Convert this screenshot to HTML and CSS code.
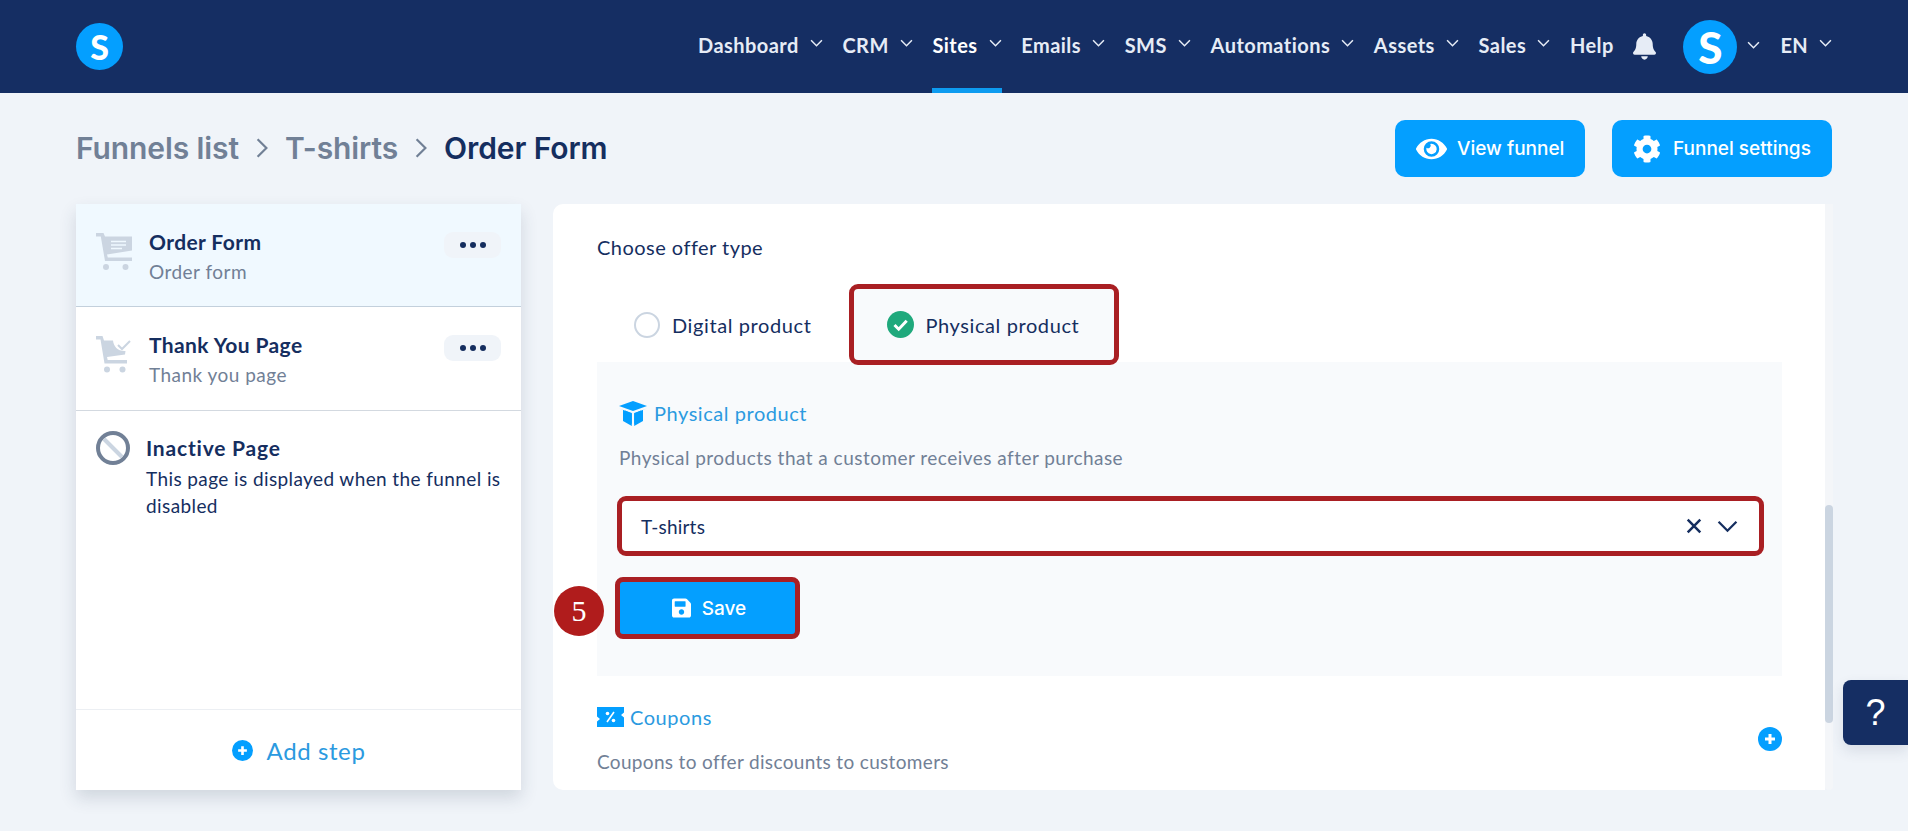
FILE: index.html
```html
<!DOCTYPE html>
<html lang="en">
	<head>
		<meta charset="UTF-8">
		<link rel="stylesheet" href="styles.css">
		<title>Order Form</title>
	</head>
	<body>
		<header class="topbar">
			<div class="logo">S</div>
			<nav class="nav">
				<a class="nav-item">Dashboard<svg class="caret" viewBox="0 0 12 7"><path d="M1 1l5 5 5-5"/></svg></a>
				<a class="nav-item">CRM<svg class="caret" viewBox="0 0 12 7"><path d="M1 1l5 5 5-5"/></svg></a>
				<a class="nav-item active">Sites<svg class="caret" viewBox="0 0 12 7"><path d="M1 1l5 5 5-5"/></svg></a>
				<a class="nav-item">Emails<svg class="caret" viewBox="0 0 12 7"><path d="M1 1l5 5 5-5"/></svg></a>
				<a class="nav-item">SMS<svg class="caret" viewBox="0 0 12 7"><path d="M1 1l5 5 5-5"/></svg></a>
				<a class="nav-item">Automations<svg class="caret" viewBox="0 0 12 7"><path d="M1 1l5 5 5-5"/></svg></a>
				<a class="nav-item">Assets<svg class="caret" viewBox="0 0 12 7"><path d="M1 1l5 5 5-5"/></svg></a>
				<a class="nav-item">Sales<svg class="caret" viewBox="0 0 12 7"><path d="M1 1l5 5 5-5"/></svg></a>
				<a class="nav-item">Help</a>
				<svg class="bell" viewBox="0 0 448 512"><path d="M224 512c35.32 0 63.97-28.65 63.97-64H160.03c0 35.35 28.65 64 63.97 64zm215.39-149.71c-19.32-20.76-55.47-51.99-55.47-154.29 0-77.7-54.48-139.9-127.94-155.16V32c0-17.67-14.32-32-31.98-32s-31.98 14.33-31.98 32v20.84C118.56 68.1 64.08 130.3 64.08 208c0 102.3-36.15 133.53-55.47 154.29-6 6.45-8.66 14.16-8.61 21.71.11 16.4 12.98 32 32.1 32h383.8c19.12 0 32-15.6 32.1-32 .05-7.55-2.61-15.27-8.61-21.71z"/></svg>
				<div class="avatar-wrap">
					<div class="avatar">S</div>
					<svg class="caret" viewBox="0 0 12 7"><path d="M1 1l5 5 5-5"/></svg>
				</div>
				<a class="nav-item lang">EN<svg class="caret" viewBox="0 0 12 7"><path d="M1 1l5 5 5-5"/></svg></a>
			</nav>
		</header>

		<main class="page">
			<div class="page-head">
				<div class="crumbs">
					<span class="crumb">Funnels list</span>
					<svg class="crumb-sep" viewBox="0 0 12 20"><path d="M2 2l8 8-8 8"/></svg>
					<span class="crumb">T-shirts</span>
					<svg class="crumb-sep" viewBox="0 0 12 20"><path d="M2 2l8 8-8 8"/></svg>
					<span class="crumb current">Order Form</span>
				</div>
				<div class="head-actions">
					<div class="btn btn-view">
						<svg class="btn-icon eye" viewBox="0 0 576 512"><path d="M572.52 241.4C518.29 135.59 410.93 64 288 64S57.68 135.64 3.48 241.41a32.35 32.35 0 0 0 0 29.19C57.71 376.41 165.07 448 288 448s230.32-71.64 284.52-177.41a32.35 32.35 0 0 0 0-29.19zM288 400a144 144 0 1 1 144-144 143.93 143.93 0 0 1-144 144zm0-240a95.31 95.31 0 0 0-25.31 3.79 47.85 47.85 0 0 1-66.9 66.9A95.78 95.78 0 1 0 288 160z"/></svg>
						View funnel
					</div>
					<div class="btn btn-settings">
						<svg class="btn-icon cog" viewBox="0 0 512 512"><path d="M487.4 315.7l-42.6-24.6c4.3-23.2 4.3-47 0-70.2l42.6-24.6c4.9-2.8 7.1-8.6 5.5-14-11.1-35.6-30-67.8-54.7-94.6-3.8-4.1-10-5.1-14.8-2.3L380.8 110c-17.9-15.4-38.5-27.3-60.8-35.1V25.8c0-5.6-3.9-10.5-9.4-11.7-36.7-8.2-74.3-7.8-109.2 0-5.5 1.2-9.4 6.1-9.4 11.7V75c-22.2 7.9-42.8 19.8-60.8 35.1L88.7 85.5c-4.9-2.8-11-1.9-14.8 2.3-24.7 26.7-43.6 58.9-54.7 94.6-1.7 5.4.6 11.2 5.5 14L67.3 221c-4.3 23.2-4.3 47 0 70.2l-42.6 24.6c-4.9 2.8-7.1 8.6-5.5 14 11.1 35.6 30 67.8 54.7 94.6 3.8 4.1 10 5.1 14.8 2.3l42.6-24.6c17.9 15.4 38.5 27.3 60.8 35.1v49.2c0 5.6 3.9 10.5 9.4 11.7 36.7 8.2 74.3 7.8 109.2 0 5.5-1.2 9.4-6.1 9.4-11.7v-49.2c22.2-7.9 42.8-19.8 60.8-35.1l42.6 24.6c4.9 2.8 11 1.9 14.8-2.3 24.7-26.7 43.6-58.9 54.7-94.6 1.5-5.5-.7-11.3-5.6-14.1zM256 336c-44.1 0-80-35.9-80-80s35.9-80 80-80 80 35.9 80 80-35.9 80-80 80z"/></svg>
						Funnel settings
					</div>
				</div>
			</div>

			<div class="columns">
				<aside class="sidebar">
					<div class="step selected">
						<svg class="step-icon" viewBox="0 0 36 37"><path d="M0 0h7.500l1.500 3.500h27v14L11 21.500l.8 3H36v3.500H9L4.800 3.500H0z"/><path class="cut" d="M15 8.500h15M15 12h15M15 15.500h11"/><circle cx="10" cy="34" r="3"/><circle cx="29.500" cy="34" r="3"/></svg>
						<div class="step-text">
							<div class="step-title">Order Form</div>
							<div class="step-sub">Order form</div>
						</div>
						<div class="dots"><i></i><i></i><i></i></div>
					</div>
					<div class="step">
						<svg class="step-icon" viewBox="0 0 36 37"><path d="M0 0h6.500l1.500 4.500h9c.5 6 5 11 12.500 10.500l-.5 3.500-18 2.500.7 3H31v3.500H8.500L4.500 3.500H0z"/><path class="tick" d="M22 9l4 4 8-8"/><circle cx="11" cy="33.500" r="3"/><circle cx="26.500" cy="33.500" r="3"/></svg>
						<div class="step-text">
							<div class="step-title">Thank You Page</div>
							<div class="step-sub">Thank you page</div>
						</div>
						<div class="dots"><i></i><i></i><i></i></div>
					</div>
					<div class="step inactive">
						<svg class="ban" viewBox="0 0 34 34"><line x1="8" y1="8" x2="26" y2="26"/><circle cx="17" cy="17" r="15"/></svg>
						<div class="step-text">
							<div class="step-title">Inactive Page</div>
							<div class="step-desc">This page is displayed when the funnel is disabled</div>
						</div>
					</div>
					<div class="add-step">
						<svg class="plus add-plus" viewBox="0 0 24 24"><circle cx="12" cy="12" r="12"/><path d="M12 7v10M7 12h10"/></svg>
						Add step
					</div>
				</aside>

				<section class="panel-wrap">
					<div class="panel">
						<div class="offer-label">Choose offer type</div>
						<div class="tabs">
							<div class="tab">
								<span class="radio"></span>
								Digital product
							</div>
							<div class="tab tab-active">
								<svg class="check" viewBox="0 0 27 27"><circle cx="13.500" cy="13.500" r="13.500"/><path d="M7.500 14l4.200 4.200 8-8.400"/></svg>
								Physical product
							</div>
						</div>
						<div class="product-box">
							<div class="section-title">
								<svg class="box-icon" viewBox="0 0 28 25"><path d="M14 0L0 5l14 5 14-5z"/><path d="M0 7.500l4 1.500v11l8.800 5V12zM28 7.500L24 9v11l-8.800 5V12z"/><path d="M6 9.500v9.500l6.800 4V12.500z"/><path d="M22 9.500v9.500l-6.800 4V12.500z"/></svg>
								Physical product
							</div>
							<div class="section-desc">Physical products that a customer receives after purchase</div>
							<div class="select outlined">
								<span>T-shirts</span>
								<div class="select-icons">
									<svg class="sel-x" viewBox="0 0 14 14"><path d="M1.500 1.500l11 11M12.500 1.500l-11 11"/></svg>
									<svg class="sel-down" viewBox="0 0 20 12"><path d="M1.500 1.500l8.500 8.500 8.500-8.500"/></svg>
								</div>
							</div>
							<div class="save-row">
								<div class="badge">5</div>
								<div class="save-btn outlined">
									<svg class="save-icon" viewBox="0 0 448 512"><path d="M433.941 129.941l-83.882-83.882A48 48 0 0 0 316.118 32H48C21.49 32 0 53.49 0 80v352c0 26.51 21.49 48 48 48h352c26.51 0 48-21.49 48-48V163.882a48 48 0 0 0-14.059-33.941zM224 416c-35.346 0-64-28.654-64-64 0-35.346 28.654-64 64-64s64 28.654 64 64c0 35.346-28.654 64-64 64zm96-304.520V212c0 6.627-5.373 12-12 12H76c-6.627 0-12-5.373-12-12V108c0-6.627 5.373-12 12-12h228.520c3.183 0 6.235 1.264 8.485 3.515l3.480 3.480A11.996 11.996 0 0 1 320 111.480z"/></svg>
									Save
								</div>
							</div>
						</div>
						<div class="coupons">
							<div>
								<div class="section-title">
									<svg class="coupon-icon" viewBox="0 0 27 20"><path class="coupon-bg" d="M0 0h27v5.500l-3 2.500 3 2.500v9.500H0v-5.500l3-2.500-3-2.500z"/><path class="coupon-mark" d="M17 5l-7 10"/><circle class="coupon-dot" cx="10.500" cy="6.500" r="1.800"/><circle class="coupon-dot" cx="16.500" cy="13.500" r="1.800"/></svg>
									Coupons
								</div>
								<div class="section-desc">Coupons to offer discounts to customers</div>
							</div>
							<svg class="plus coupon-plus" viewBox="0 0 24 24"><circle cx="12" cy="12" r="12"/><path d="M12 7v10M7 12h10"/></svg>
						</div>
					</div>
					<div class="scrollbar"><div class="thumb"></div></div>
				</section>
			</div>
		</main>

		<div class="help-tab">?</div>
	</body>
</html>
```

FILE: styles.css
```css
* {
	box-sizing: border-box;
}
html, body {
	height: 100%;
}
body {
	margin: 0;
	overflow: hidden;
	background: #f0f4f9;
	font-family: 'Lato', 'Open Sans', sans-serif;
	font-size: 20px;
	color: #152e5f;
}

/* top bar */
.topbar {
	display: flex;
	align-items: center;
	justify-content: space-between;
	height: 93px;
	padding: 0 76px;
	background: #152e63;
}
.logo {
	display: flex;
	align-items: center;
	justify-content: center;
	width: 47px;
	height: 47px;
	border-radius: 50%;
	background: #049fff;
	color: #fff;
	font-size: 34px;
	font-weight: 900;
}
.nav {
	display: flex;
	align-items: center;
	height: 93px;
}
.nav-item {
	position: relative;
	display: flex;
	align-items: center;
	height: 93px;
	padding-bottom: 3px;
	margin-right: 19.7px;
	color: #e6ecf6;
	font-size: 20px;
	font-weight: 700;
	letter-spacing: 0.45px;
}
.nav-item.active {
	color: #fff;
}
.nav-item.active::after {
	content: "";
	position: absolute;
	left: 0;
	right: 0;
	bottom: 0;
	height: 5px;
	background: #0d9bf0;
}
.caret {
	width: 13px;
	height: 8px;
	margin: -4px 0 0 11px;
	fill: none;
	stroke: #e6ecf6;
	stroke-width: 1.4;
}
.bell {
	width: 23px;
	height: 27px;
	margin: 0 27px 0 0;
	fill: #e6ecf6;
}
.avatar-wrap {
	display: flex;
	align-items: center;
	margin-right: 20px;
}
.avatar {
	display: flex;
	align-items: center;
	justify-content: center;
	width: 54px;
	height: 54px;
	border-radius: 50%;
	background: #049fff;
	color: #fff;
	font-size: 44px;
	font-weight: 900;
}
.avatar-wrap .caret {
	margin-left: 10px;
}
.lang {
	margin-right: 0;
	letter-spacing: 0.3px;
}

/* page */
.page {
	padding: 0 76px;
}
.page-head {
	display: flex;
	align-items: center;
	justify-content: space-between;
	height: 111px;
}
.crumbs {
	display: flex;
	align-items: center;
	margin-top: -2px;
	font-family: 'Inter', sans-serif;
	font-size: 30px;
	font-weight: 600;
	letter-spacing: -0.1px;
	color: #718096;
}
.crumb-sep {
	width: 14px;
	height: 22px;
	margin: 0 16px;
	fill: none;
	stroke: #718096;
	stroke-width: 2;
}
.current {
	color: #152e5f;
}
.head-actions {
	display: flex;
	gap: 27px;
}
.btn {
	display: flex;
	align-items: center;
	height: 57px;
	border-radius: 10px;
	background: #049fff;
	color: #fff;
	font-family: 'Inter', sans-serif;
	font-size: 19px;
	font-weight: 500;
}
.btn-view {
	width: 190px;
	padding-left: 21px;
}
.btn-settings {
	width: 220px;
	padding-left: 21px;
}
.btn-icon {
	fill: #fff;
}
.eye {
	width: 31px;
	height: 28px;
	margin-right: 10px;
}
.cog {
	width: 28px;
	height: 28px;
	margin-right: 12px;
}

.columns {
	display: flex;
	gap: 32px;
	height: 586px;
}

/* left column */
.sidebar {
	position: relative;
	display: flex;
	flex-direction: column;
	flex: 0 0 445px;
	background: #fff;
	box-shadow: 0 8px 16px rgba(45, 60, 90, 0.16);
}
.step {
	display: flex;
	align-items: flex-start;
	height: 104px;
	padding: 24px 20px 0 20px;
	border-bottom: 1px solid #d3d9e0;
}
.step.selected {
	height: 103px;
	background: #f0f9ff;
	border-bottom-color: #c3d0dc;
}
.step-icon {
	flex: none;
	width: 36px;
	height: 37px;
	margin: 5px 17px 0 0;
	fill: #cbd5e1;
}
.cut {
	fill: none;
	stroke: #f0f9ff;
	stroke-width: 1.4;
}
.tick {
	fill: none;
	stroke: #cbd5e1;
	stroke-width: 2;
}
.step-text {
	flex: 1;
}
.step-title {
	font-size: 21px;
	font-weight: 700;
	line-height: 28px;
	letter-spacing: 0.4px;
}
.step-sub {
	margin-top: 2px;
	color: #718096;
	font-size: 19px;
	line-height: 28px;
	letter-spacing: 0.47px;
}
.dots {
	display: flex;
	align-items: center;
	justify-content: center;
	gap: 4px;
	width: 57px;
	height: 26px;
	margin-top: 4px;
	border-radius: 9px;
	background: #f0f4f9;
}
.dots i {
	width: 6px;
	height: 6px;
	border-radius: 50%;
	background: #152e5f;
}
.inactive {
	flex: 1;
	padding: 20px 8px 0 20px;
	border-bottom: 1px solid #eceff3;
}
.ban {
	flex: none;
	width: 34px;
	height: 34px;
	margin-right: 16px;
	fill: none;
}
.ban circle {
	stroke: #718096;
	stroke-width: 4;
}
.ban line {
	stroke: #cbd5e1;
	stroke-width: 4;
}
.inactive .step-title {
	margin-top: 3px;
	letter-spacing: 0.8px;
}
.step-desc {
	margin-top: 3px;
	font-size: 19px;
	line-height: 27px;
	letter-spacing: 0.4px;
}
.add-step {
	display: flex;
	align-items: center;
	justify-content: center;
	gap: 14px;
	height: 80px;
	color: #2b9ae0;
	font-size: 24px;
	letter-spacing: 0.6px;
}
.plus circle {
	fill: #049fff;
}
.plus path {
	fill: none;
	stroke: #fff;
	stroke-width: 3;
}
.add-plus {
	width: 21px;
	height: 21px;
}

/* right column */
.panel-wrap {
	display: flex;
	flex: 1;
}
.panel {
	flex: 1;
	padding: 32px 43px 0 44px;
	border-radius: 10px 0 0 10px;
	background: #fff;
	overflow: hidden;
}
.offer-label {
	line-height: 22px;
	letter-spacing: 0.47px;
}
.tabs {
	display: flex;
	height: 76px;
	margin-top: 28px;
	padding-left: 37px;
}
.tab {
	display: flex;
	align-items: center;
	margin-right: 38px;
	padding-top: 2px;
	letter-spacing: 0.6px;
}
.radio {
	width: 26px;
	height: 26px;
	margin-right: 12px;
	border: 2px solid #cbd5e1;
	border-radius: 50%;
	background: #fff;
}
.tab-active {
	width: 270px;
	height: 81px;
	margin-top: -2px;
	margin-right: 0;
	padding: 0 0 0 33px;
	border: 5px solid #a91f23;
	border-radius: 9px;
	background: #f8fafc;
}
.check {
	width: 27px;
	height: 27px;
	margin-right: 11px;
}
.check circle {
	fill: #1fa97c;
}
.check path {
	fill: none;
	stroke: #fff;
	stroke-width: 3;
}
.product-box {
	height: 314px;
	padding: 36px 18px 0 22px;
	background: #f8fafc;
}
.section-title {
	display: flex;
	align-items: center;
	color: #2b9ae0;
	line-height: 30px;
	letter-spacing: 0.55px;
}
.box-icon {
	width: 28px;
	height: 25px;
	margin-right: 7px;
	fill: #049fff;
}
.section-desc {
	margin-top: 16px;
	color: #718096;
	font-size: 19px;
	line-height: 28px;
	letter-spacing: 0.47px;
}
.outlined {
	border: 5px solid #a91f23;
}
.select {
	display: flex;
	align-items: center;
	justify-content: space-between;
	width: 1147px;
	height: 60px;
	margin: 24px 0 0 -2px;
	padding: 0 21px 0 19px;
	border-radius: 9px;
	background: #fff;
	font-size: 19px;
	letter-spacing: 0.2px;
}
.select-icons {
	display: flex;
	align-items: center;
	gap: 15px;
}
.sel-x {
	width: 16px;
	height: 16px;
	fill: none;
	stroke: #152e5f;
	stroke-width: 2.2;
}
.sel-down {
	width: 21px;
	height: 13px;
	fill: none;
	stroke: #152e5f;
	stroke-width: 2.2;
}
.save-row {
	position: relative;
	margin: 21px 0 0 -4px;
}
.save-btn {
	display: flex;
	align-items: center;
	justify-content: center;
	gap: 11px;
	width: 185px;
	height: 62px;
	padding-left: 3px;
	border-radius: 8px;
	background: #049fff;
	color: #fff;
	font-family: 'Inter', sans-serif;
	font-size: 19px;
	font-weight: 500;
}
.save-icon {
	width: 19px;
	height: 22px;
	fill: #fff;
}
/* step marker sits over the panel edge */
.badge {
	position: absolute;
	left: -61px;
	top: 9px;
	width: 50px;
	height: 50px;
	border-radius: 50%;
	background: #b01c1c;
	color: #fff;
	font-family: 'Liberation Serif', serif;
	font-size: 30px;
	line-height: 50px;
	text-align: center;
}
.coupons {
	display: flex;
	justify-content: space-between;
	align-items: flex-end;
	padding-top: 26px;
}
.coupon-icon {
	width: 27px;
	height: 20px;
	margin-right: 6px;
}
.coupon-bg {
	fill: #049fff;
}
.coupon-mark {
	fill: none;
	stroke: #fff;
	stroke-width: 1.6;
}
.coupon-dot {
	fill: #fff;
}
.coupon-plus {
	width: 24px;
	height: 24px;
	margin-bottom: 25px;
	flex: none;
}
.coupons .section-desc {
	margin-top: 16px;
	letter-spacing: 0.33px;
}
.scrollbar {
	flex: 0 0 8px;
	border-radius: 0 0 4px 4px;
	background: #f4f6f9;
}
.thumb {
	height: 218px;
	margin-top: 301px;
	border-radius: 4px;
	background: #cbd5e1;
}

/* floating help tab */
.help-tab {
	position: absolute;
	right: 0;
	top: 680px;
	width: 65px;
	height: 65px;
	border-radius: 8px 0 0 8px;
	background: #152e63;
	box-shadow: 0 6px 14px rgba(45, 60, 90, 0.12);
	color: #fff;
	font-family: 'Liberation Sans', sans-serif;
	font-size: 36px;
	line-height: 65px;
	text-align: center;
}
```
